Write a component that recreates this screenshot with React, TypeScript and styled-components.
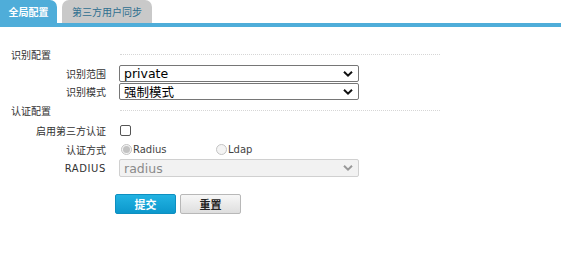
import React from 'react';
import styled, { createGlobalStyle } from 'styled-components';

const GlobalStyle = createGlobalStyle`
    html, body {
        margin: 0;
        padding: 0;
        background: #fff;
    }
    body {
        font-family: 'DejaVu Sans', 'Noto Sans CJK SC', sans-serif;
        font-size: 12px;
        color: #333;
    }
`;

const Page = styled.div`
    width: 561px;
    height: 264px;
    overflow: hidden;
`;

const TabBar = styled.div`
    display: flex;
    gap: 5px;
    height: 23px;
    border-bottom: 4px solid #4fadd9;
`;

const Tab = styled.div<{ $active?: boolean }>`
    display: flex;
    align-items: center;
    justify-content: center;
    width: ${(p) => (p.$active ? '57px' : '90px')};
    height: 23px;
    border-radius: ${(p) => (p.$active ? '0 7px 0 0' : '7px 7px 0 0')};
    background: ${(p) => (p.$active ? '#4fadd9' : '#c9c9c9')};
    color: ${(p) => (p.$active ? '#fff' : '#2f6f8f')};
    font-family: 'Noto Sans CJK SC', sans-serif;
    font-weight: ${(p) => (p.$active ? 700 : 400)};
    font-size: 10px;
`;

const Form = styled.div`
    display: flex;
    flex-direction: column;
    padding-top: 18px;
`;

const SectionRow = styled.div<{ $top?: number }>`
    display: flex;
    align-items: center;
    height: 18px;
    margin-top: ${(p) => p.$top ?? 0}px;
`;

const SectionTitle = styled.div`
    width: 120px;
    padding-left: 11px;
    box-sizing: border-box;
    font-family: 'Noto Sans CJK SC', sans-serif;
    font-size: 10px;
    color: #333;
`;

const Dots = styled.div`
    width: 320px;
    border-top: 1px dotted #d6d6d6;
`;

const Row = styled.div<{ $h?: number; $top?: number }>`
    display: flex;
    align-items: center;
    height: ${(p) => p.$h ?? 18}px;
    margin-top: ${(p) => p.$top ?? 0}px;
`;

const Label = styled.div<{ $latin?: boolean }>`
    width: 106px;
    margin-right: 13px;
    text-align: right;
    font-family: ${(p) =>
        p.$latin ? "'DejaVu Sans', sans-serif" : "'Noto Sans CJK SC', sans-serif"};
    font-size: 10px;
    letter-spacing: ${(p) => (p.$latin ? '0.6px' : '0')};
    color: #333;
`;

const SelectBox = styled.div<{ $disabled?: boolean; $h?: number }>`
    position: relative;
    width: 240px;
    height: ${(p) => p.$h ?? 17}px;
    box-sizing: border-box;
    border: 1px solid ${(p) => (p.$disabled ? '#d0d0d0' : '#767676')};
    border-radius: 2px;
    background: ${(p) => (p.$disabled ? '#f2f2f2' : '#fff')};
    display: flex;
    align-items: center;
    padding-left: 4px;
    color: ${(p) => (p.$disabled ? '#8a8a8a' : '#000')};
    font-size: 12.5px;
    font-family: 'DejaVu Sans', 'Noto Sans CJK SC', sans-serif;
`;

const Chevron = styled.svg`
    position: absolute;
    right: 5px;
    top: 50%;
    transform: translateY(-50%);
`;

const Check = styled.span`
    display: inline-block;
    width: 9px;
    height: 9px;
    border: 1px solid #555;
    border-radius: 2px;
    margin-left: 1px;
`;

const RadioGroup = styled.div`
    display: flex;
    align-items: center;
`;

const RadioItem = styled.label<{ $w?: number }>`
    display: flex;
    align-items: center;
    width: ${(p) => p.$w ?? 95}px;
    font-family: 'DejaVu Sans', sans-serif;
    font-size: 10px;
    color: #444;
`;

const RadioDot = styled.span<{ $checked?: boolean }>`
    display: inline-flex;
    align-items: center;
    justify-content: center;
    width: 9px;
    height: 9px;
    border-radius: 50%;
    border: 1px solid #c4c4c4;
    background: #f4f4f4;
    margin: 0 1px 0 2px;
    &::after {
        content: '';
        display: ${(p) => (p.$checked ? 'block' : 'none')};
        width: 7px;
        height: 7px;
        border-radius: 50%;
        background: #c2c2c2;
    }
`;

const Buttons = styled.div`
    display: flex;
    gap: 4px;
    margin-top: 17px;
    padding-left: 115px;
`;

const Button = styled.button<{ $primary?: boolean }>`
    width: 61px;
    height: 20px;
    box-sizing: border-box;
    border-radius: 2px;
    border: 1px solid ${(p) => (p.$primary ? '#0e8fc0' : '#b8b8b8')};
    background: ${(p) =>
        p.$primary
            ? 'linear-gradient(#22b3e2, #0c98cc)'
            : 'linear-gradient(#f7f7f7, #dedede)'};
    color: ${(p) => (p.$primary ? '#fff' : '#222')};
    font-family: 'Noto Sans CJK SC', sans-serif;
    font-size: 11px;
    font-weight: 700;
    padding: 0;
    cursor: pointer;
`;

const Arrow: React.FC<{ color?: string }> = ({ color = '#111' }) => (
    <Chevron width="10" height="7" viewBox="0 0 10 7">
        <path d="M1 1.2 L5 5.2 L9 1.2" fill="none" stroke={color} strokeWidth="2" />
    </Chevron>
);

const App: React.FC = () => {
    return (
        <Page>
            <GlobalStyle />
            <TabBar>
                <Tab $active>全局配置</Tab>
                <Tab>第三方用户同步</Tab>
            </TabBar>
            <Form>
                <SectionRow>
                    <SectionTitle>识别配置</SectionTitle>
                    <Dots />
                </SectionRow>
                <Row $h={17} $top={2}>
                    <Label>识别范围</Label>
                    <SelectBox>
                        private
                        <Arrow />
                    </SelectBox>
                </Row>
                <Row $h={17} $top={1}>
                    <Label>识别模式</Label>
                    <SelectBox>
                        强制模式
                        <Arrow />
                    </SelectBox>
                </Row>
                <SectionRow $top={1}>
                    <SectionTitle>认证配置</SectionTitle>
                    <Dots />
                </SectionRow>
                <Row $top={2}>
                    <Label>启用第三方认证</Label>
                    <Check />
                </Row>
                <Row $top={1}>
                    <Label>认证方式</Label>
                    <RadioGroup>
                        <RadioItem $w={95}>
                            <RadioDot $checked />
                            Radius
                        </RadioItem>
                        <RadioItem>
                            <RadioDot />
                            Ldap
                        </RadioItem>
                    </RadioGroup>
                </Row>
                <Row $top={1}>
                    <Label $latin>RADIUS</Label>
                    <SelectBox $disabled $h={18}>
                        radius
                        <Arrow color="#999" />
                    </SelectBox>
                </Row>
                <Buttons>
                    <Button $primary type="button">提交</Button>
                    <Button type="button">重置</Button>
                </Buttons>
            </Form>
        </Page>
    );
};

export default App;
